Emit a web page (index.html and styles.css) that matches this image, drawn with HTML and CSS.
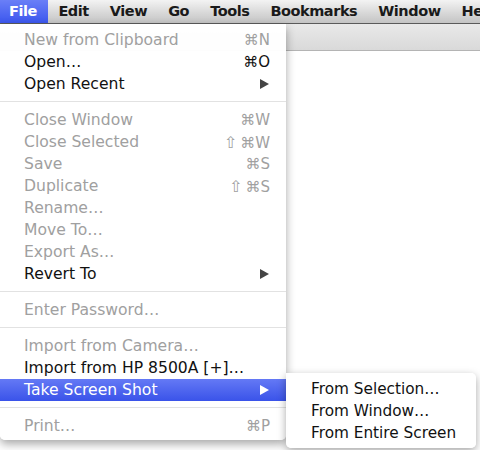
FILE: index.html
```html
<!DOCTYPE html>
<html>
<head>
<meta charset="utf-8">
<link rel="stylesheet" href="styles.css">
</head>
<body>
<div class="menubar">
  <span class="mb-item active">File</span>
  <span class="mb-item">Edit</span>
  <span class="mb-item">View</span>
  <span class="mb-item">Go</span>
  <span class="mb-item">Tools</span>
  <span class="mb-item">Bookmarks</span>
  <span class="mb-item">Window</span>
  <span class="mb-item">Help</span>
</div>
<div class="desktop">
  <div class="window">
    <div class="toolbar"></div>
    <div class="content"></div>
  </div>

  <div class="menu">
    <div class="item dis"><span>New from Clipboard</span><span class="sc">⌘N</span></div>
    <div class="item"><span>Open…</span><span class="sc">⌘O</span></div>
    <div class="item"><span>Open Recent</span><span class="arrow"></span></div>
    <div class="sep"></div>
    <div class="item dis"><span>Close Window</span><span class="sc">⌘W</span></div>
    <div class="item dis"><span>Close Selected</span><span class="sc"><span class="shift">⇧</span>⌘W</span></div>
    <div class="item dis"><span>Save</span><span class="sc">⌘S</span></div>
    <div class="item dis"><span>Duplicate</span><span class="sc"><span class="shift">⇧</span>⌘S</span></div>
    <div class="item dis"><span>Rename…</span></div>
    <div class="item dis"><span>Move To…</span></div>
    <div class="item dis"><span>Export As…</span></div>
    <div class="item"><span>Revert To</span><span class="arrow"></span></div>
    <div class="sep"></div>
    <div class="item dis"><span>Enter Password…</span></div>
    <div class="sep"></div>
    <div class="item dis"><span>Import from Camera…</span></div>
    <div class="item"><span>Import from HP 8500A [+]…</span></div>
    <div class="item hl"><span>Take Screen Shot</span><span class="arrow"></span></div>
    <div class="sep"></div>
    <div class="item dis"><span>Print…</span><span class="sc">⌘P</span></div>
  </div>

  <div class="submenu">
    <div class="sitem">From Selection…</div>
    <div class="sitem">From Window…</div>
    <div class="sitem">From Entire Screen</div>
  </div>
</div>
</body>
</html>
```
FILE: styles.css
```css
html, body {
  margin: 0;
  padding: 0;
  width: 480px;
  height: 450px;
  overflow: hidden;
  background: #fff;
  font-family: "DejaVu Sans", "Liberation Sans", sans-serif;
}

.menubar {
  height: 23px;
  display: flex;
  align-items: center;
  background: linear-gradient(#f3f3f3, #d6d6d6 60%, #c4c4c4);
  border-bottom: 1px solid #5a5a5a;
  white-space: nowrap;
  overflow: hidden;
}

.mb-item {
  font-weight: bold;
  font-size: 14.5px;
  color: #1a1a1a;
  padding: 0 10.5px;
  height: 23px;
  line-height: 23px;
  letter-spacing: -0.45px;
}

.mb-item.active {
  background: linear-gradient(#6a7ff7, #3c57ee);
  color: #fff;
  padding: 0 11px 0 9px;
}

.desktop {
  position: relative;
  height: 426px;
}

.window {
  display: flex;
  flex-direction: column;
  height: 100%;
}

.toolbar {
  height: 26px;
  background: linear-gradient(#e9e9e9, #d9d9d9);
  border-bottom: 1px solid #b4b4b4;
}

.content {
  flex: 1;
  background: #fff;
}

.menu {
  position: absolute;
  left: 0;
  top: 0;
  width: 286px;
  padding: 5px 0 3px;
  background: rgba(255, 255, 255, 0.97);
  border-radius: 0 0 5px 5px;
  box-shadow: 0 4px 10px rgba(0, 0, 0, 0.35);
  font-size: 15.6px;
}

.item {
  height: 22px;
  display: flex;
  align-items: center;
  justify-content: space-between;
  padding: 0 16px 0 24px;
  color: #111;
  white-space: nowrap;
}

.item.dis {
  color: #a0a0a0;
}

.item.hl {
  background: linear-gradient(#6479f5, #3a53e9);
  color: #fff;
}

.sc {
  font-size: 15px;
}

.shift {
  margin-right: 3px;
  font-size: 16px;
}

.arrow {
  width: 0;
  height: 0;
  border-top: 5px solid transparent;
  border-bottom: 5px solid transparent;
  border-left: 9px solid #444;
  margin-right: 1px;
}

.item.hl .arrow {
  border-left-color: #fff;
}

.sep {
  height: 1px;
  background: #e2e2e2;
  margin: 6px 0 7px;
}

.submenu {
  position: absolute;
  left: 286px;
  top: 349px;
  width: 190px;
  padding: 5px 0 4px;
  background: rgba(255, 255, 255, 0.97);
  border-radius: 0 5px 5px 5px;
  box-shadow: 0 3px 9px rgba(0, 0, 0, 0.35);
  font-size: 15.3px;
}

.sitem {
  height: 22px;
  line-height: 22px;
  padding-left: 25px;
  color: #111;
  white-space: nowrap;
}
```
